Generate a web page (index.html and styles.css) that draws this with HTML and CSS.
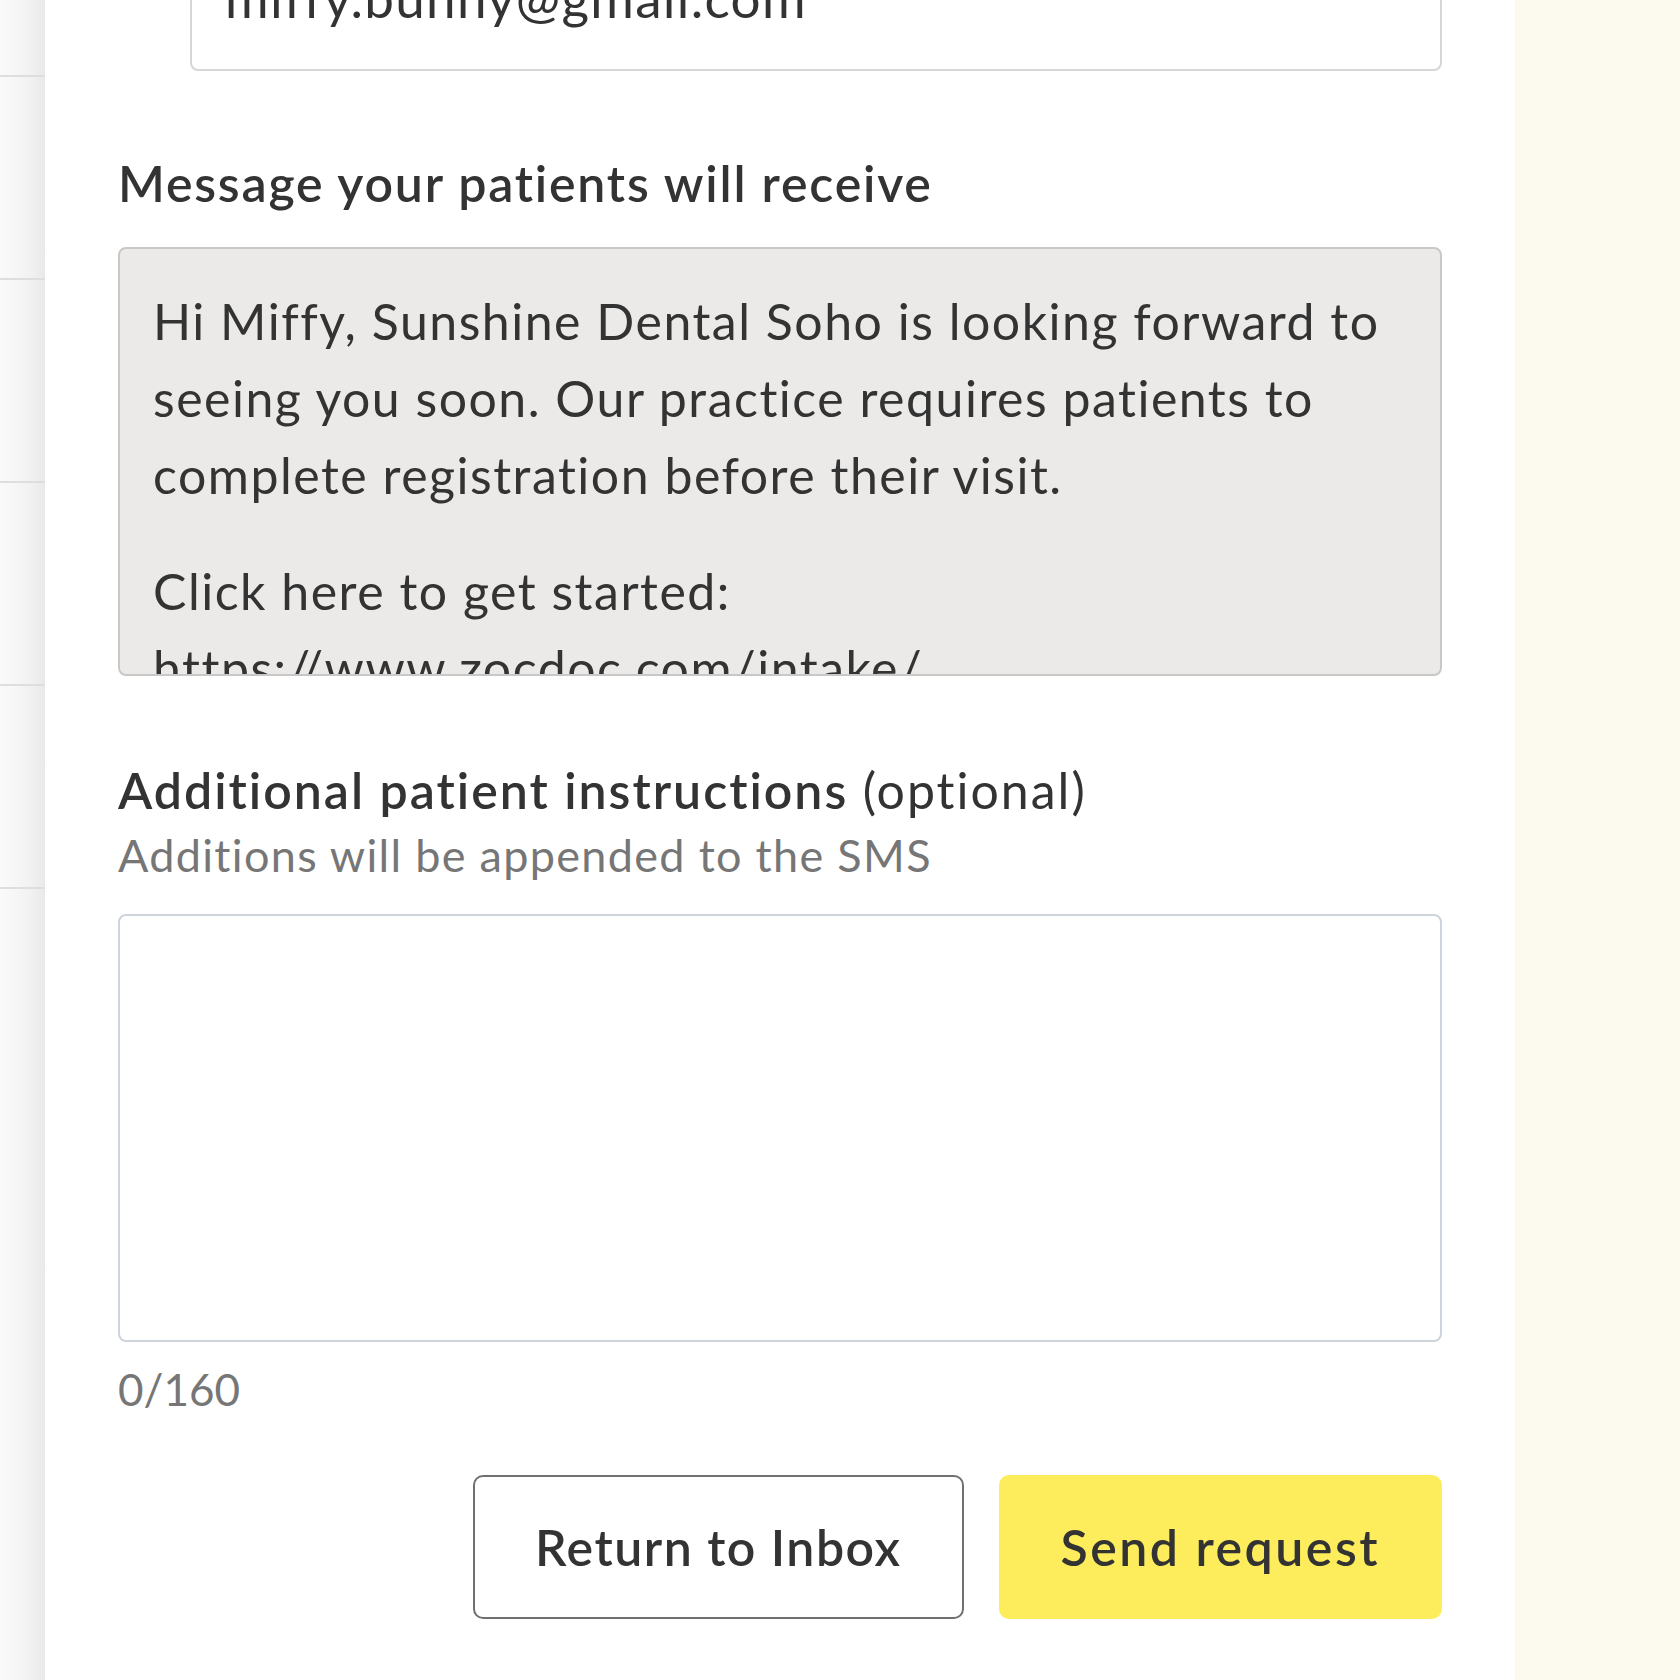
FILE: index.html
```html
<!DOCTYPE html>
<html lang="en">
<head>
<meta charset="utf-8">
<title>Send intake request</title>
<link rel="stylesheet" href="styles.css">
</head>
<body>
<div class="layout">
  <aside class="rail">
    <div class="rail-row first"></div>
    <div class="rail-row"></div>
    <div class="rail-row"></div>
    <div class="rail-row"></div>
    <div class="rail-row"></div>
  </aside>
  <main class="panel">
    <div class="email-row">
      <div class="email-box">miffy.bunny@gmail.com</div>
    </div>

    <h2 class="label">Message your patients will receive</h2>
    <div class="preview">
      <p>Hi Miffy, Sunshine Dental Soho is looking forward to seeing you soon. Our practice requires patients to complete registration before their visit.</p>
      <p>Click here to get started: https://www.zocdoc.com/intake/</p>
    </div>

    <h2 class="label label-extra">Additional patient instructions <span class="optional">(optional)</span></h2>
    <p class="hint">Additions will be appended to the SMS</p>
    <div class="textarea"></div>
    <p class="counter">0/160</p>

    <div class="actions">
      <button class="btn btn-secondary" type="button">Return to Inbox</button>
      <button class="btn btn-primary" type="button">Send request</button>
    </div>
  </main>
  <aside class="side"></aside>
</div>
</body>
</html>
```

FILE: styles.css
```css
* { box-sizing: border-box; }

html, body {
  margin: 0;
  padding: 0;
  background: #ffffff;
}

body {
  font-family: Lato, "Liberation Sans", sans-serif;
  color: #333333;
  overflow: hidden;
}

.layout {
  display: flex;
  width: 1680px;
  height: 1680px;
}

.rail {
  width: 45px;
  flex: none;
  background: linear-gradient(to right, #fafafa 0%, #f3f3f3 60%, #e9e9e9 100%);
  display: flex;
  flex-direction: column;
}

.rail-row {
  height: 203px;
  border-bottom: 2px solid #dedede;
}

.rail-row.first {
  height: 77px;
}

.panel {
  flex: 1;
  padding: 0 73px 0 73px;
  background: #ffffff;
}

.side {
  width: 165px;
  flex: none;
  background: #fcfaef;
}

.email-row {
  padding-left: 72px;
  margin-top: -59px;
}

.email-box {
  height: 130px;
  border: 2px solid #d6d6d6;
  border-radius: 8px;
  padding: 25px 33px;
  font-size: 53px;
  line-height: 60px;
  letter-spacing: 1.3px;
  color: #333333;
}

.label {
  margin: 82px 0 0;
  font-size: 50px;
  line-height: 60px;
  font-weight: 600;
  letter-spacing: 1.8px;
  color: #333333;
}

.preview {
  margin-top: 34px;
  height: 429px;
  overflow: hidden;
  background: #ebeae8;
  border: 2px solid #c9c8c6;
  border-radius: 8px;
  padding: 34px 30px 0 33px;
  font-size: 50px;
  line-height: 77px;
  letter-spacing: 1.5px;
}

.preview p {
  margin: 0;
}

.preview p + p {
  margin-top: 39px;
}

.label-extra {
  margin-top: 84px;
  letter-spacing: 2px;
}

.optional {
  font-weight: 400;
}

.hint {
  margin: 4px 0 0;
  font-size: 45px;
  line-height: 62px;
  letter-spacing: 1.3px;
  color: #767676;
}

.textarea {
  margin-top: 28px;
  height: 428px;
  border: 2px solid #cdd4dc;
  border-radius: 8px;
  background: #ffffff;
}

.counter {
  margin: 17px 0 0;
  font-size: 44px;
  line-height: 60px;
  color: #767676;
}

.actions {
  display: flex;
  justify-content: flex-end;
  gap: 35px;
  margin-top: 56px;
}

.btn {
  height: 144px;
  padding: 0 60px;
  border-radius: 10px;
  font-family: Lato, "Liberation Sans", sans-serif;
  font-size: 50px;
  font-weight: 600;
  color: #333333;
  cursor: pointer;
}

.btn-secondary {
  background: #ffffff;
  border: 2px solid #707070;
  letter-spacing: 1.5px;
}

.btn-primary {
  background: #fded5c;
  border: 2px solid #fded5c;
  letter-spacing: 2.5px;
}
```
